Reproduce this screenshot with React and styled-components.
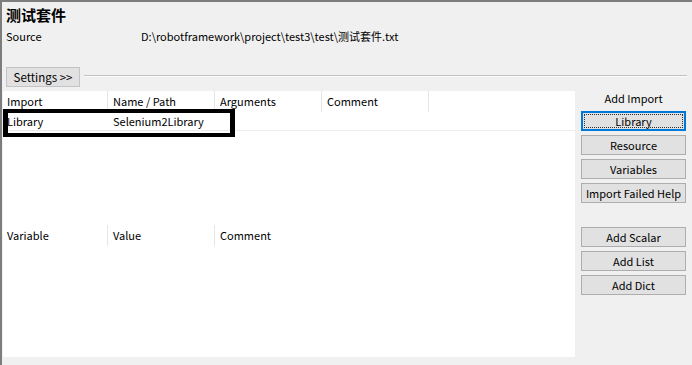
import React from 'react';
import styled, { createGlobalStyle } from 'styled-components';

const GlobalStyle = createGlobalStyle`
  body {
    margin: 0;
    background: #f0f0f0;
    font-family: "Noto Sans CJK SC", "Noto Sans", sans-serif;
    font-size: 11px;
    color: #000;
  }
`;

const Page = styled.div`
  width: 692px;
  height: 365px;
  box-sizing: border-box;
  border-top: 2px solid #7d7d7d;
  border-left: 2px solid #7d7d7d;
  background: #f0f0f0;
  display: flex;
  flex-direction: column;
  overflow: hidden;
`;

const Header = styled.div`
  padding: 2px 0 0 4px;
`;

const Title = styled.h1`
  margin: 0;
  font-size: 15px;
  font-weight: 700;
  line-height: 22px;
  height: 22px;
`;

const SourceRow = styled.div`
  display: flex;
  margin-top: 1px;
  line-height: 18px;
  height: 18px;

  span:first-child {
    width: 135px;
  }
`;

const SettingsBar = styled.div`
  display: flex;
  align-items: flex-start;
  gap: 4px;
  margin-top: 22px;
  padding-right: 5px;
`;

const SettingsButton = styled.button`
  width: 74px;
  height: 20px;
  box-sizing: border-box;
  padding: 0;
  background: #e1e1e1;
  border: 1px solid #c4c4c4;
  font-family: inherit;
  font-size: 11.5px;
  line-height: 18px;
  color: #000;
  white-space: nowrap;
`;

const Rule = styled.div`
  flex: 1;
  height: 1px;
  margin-top: 8px;
  background: #c2c2c2;
  border-bottom: 1px solid #fbfbfb;
`;

const Body = styled.div`
  display: flex;
  margin-top: 4px;
  flex: 1;
`;

const Grids = styled.div`
  width: 572px;
  margin-left: 1px;
  display: flex;
  flex-direction: column;
  padding-bottom: 8px;
`;

const Grid = styled.div`
  height: ${p => p.$h}px;
  background: #fff;
`;

const HeadRow = styled.div`
  display: flex;
  height: 21px;
  line-height: 21px;
`;

const HeadCell = styled.div`
  box-sizing: border-box;
  width: ${p => p.$w}px;
  padding-left: ${p => p.$pl}px;
  border-right: ${p => (p.$last ? 'none' : '1px solid #e6e6e6')};
`;

const DataRow = styled.div`
  position: relative;
  display: flex;
  height: 18px;
  line-height: 18px;
  border-bottom: 1px solid #ececec;
`;

const DataCell = styled.div`
  box-sizing: border-box;
  width: ${p => p.$w}px;
  padding-left: ${p => p.$pl}px;
`;

const Highlight = styled.div`
  position: absolute;
  left: 0;
  top: -3px;
  width: 232px;
  height: 28px;
  box-sizing: border-box;
  border: 4px solid #000;
  border-left-width: 5px;
  border-right-width: 5px;
`;

const Side = styled.div`
  flex: 1;
  padding-left: 6px;
  display: flex;
  flex-direction: column;
`;

const Group = styled.div`
  height: ${p => p.$h}px;
  padding-top: ${p => p.$pt}px;
  box-sizing: border-box;
  display: flex;
  flex-direction: column;
  gap: 4px;
  width: 105px;
`;

const GroupLabel = styled.div`
  height: 16px;
  line-height: 15px;
  text-align: center;
`;

const ActionButton = styled.button`
  position: relative;
  width: 105px;
  height: 20px;
  box-sizing: border-box;
  padding: 0;
  background: #e1e1e1;
  border: 1px solid ${p => (p.$focused ? '#0078d7' : '#adadad')};
  box-shadow: ${p => (p.$focused ? 'inset 0 0 0 1px #0078d7' : 'none')};
  font-family: inherit;
  font-size: 11px;
  line-height: 18px;
  color: #000;
  white-space: nowrap;

  &::after {
    content: "";
    display: ${p => (p.$focused ? 'block' : 'none')};
    position: absolute;
    inset: 2px;
    border: 1px dotted #333;
  }
`;

const columns = [
  { w: 105, pl: 4 },
  { w: 107, pl: 5 },
  { w: 107, pl: 5 },
  { w: 107, pl: 5 },
];

const App = () => {
  return (
    <>
      <GlobalStyle />
      <Page>
        <Header>
          <Title>测试套件</Title>
          <SourceRow>
            <span>Source</span>
            <span>D:\robotframework\project\test3\test\测试套件.txt</span>
          </SourceRow>
          <SettingsBar>
            <SettingsButton>Settings &gt;&gt;</SettingsButton>
            <Rule />
          </SettingsBar>
        </Header>
        <Body>
          <Grids>
            <Grid $h={134}>
              <HeadRow>
                {['Import', 'Name / Path', 'Arguments', 'Comment'].map((t, i) => (
                  <HeadCell key={t} $w={columns[i].w} $pl={columns[i].pl}>{t}</HeadCell>
                ))}
              </HeadRow>
              <DataRow>
                <DataCell $w={columns[0].w} $pl={4}>Library</DataCell>
                <DataCell $w={columns[1].w} $pl={5}>Selenium2Library</DataCell>
                <Highlight />
              </DataRow>
            </Grid>
            <Grid $h={132}>
              <HeadRow>
                {['Variable', 'Value', 'Comment'].map((t, i) => (
                  <HeadCell key={t} $w={columns[i].w} $pl={columns[i].pl} $last={i === 2}>{t}</HeadCell>
                ))}
              </HeadRow>
            </Grid>
          </Grids>
          <Side>
            <Group $h={134} $pt={0}>
              <GroupLabel>Add Import</GroupLabel>
              <ActionButton $focused>Library</ActionButton>
              <ActionButton>Resource</ActionButton>
              <ActionButton>Variables</ActionButton>
              <ActionButton>Import Failed Help</ActionButton>
            </Group>
            <Group $h={132} $pt={2}>
              <ActionButton>Add Scalar</ActionButton>
              <ActionButton>Add List</ActionButton>
              <ActionButton>Add Dict</ActionButton>
            </Group>
          </Side>
        </Body>
      </Page>
    </>
  );
};

export default App;
